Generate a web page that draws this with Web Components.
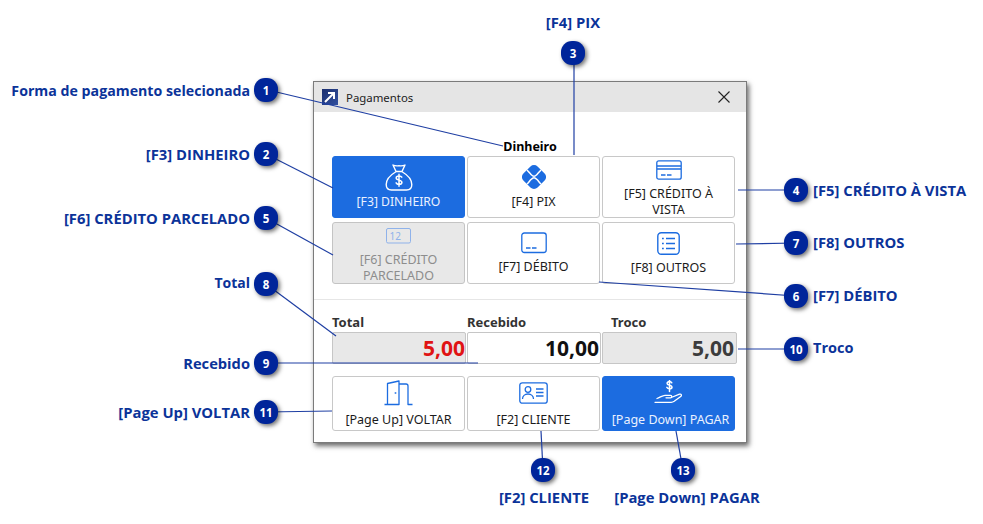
<!DOCTYPE html>
<html lang="pt"><head><meta charset="utf-8"><title>Pagamentos</title>
<style>html,body{margin:0;padding:0;background:#fff}</style></head>
<body>
<annotated-diagram>
  <pay-window>
    <span slot="title">Pagamentos</span>
    <span slot="selected">Dinheiro</span>
    <pay-button slot="methods" variant="primary" icon="bag">[F3] DINHEIRO</pay-button>
    <pay-button slot="methods" icon="pix">[F4] PIX</pay-button>
    <pay-button slot="methods" icon="card">[F5] CRÉDITO À VISTA</pay-button>
    <pay-button slot="methods" variant="disabled" icon="parc">[F6] CRÉDITO PARCELADO</pay-button>
    <pay-button slot="methods" icon="debit">[F7] DÉBITO</pay-button>
    <pay-button slot="methods" icon="list">[F8] OUTROS</pay-button>
    <amount-field slot="amounts" label="Total" value="5,00" kind="total"></amount-field>
    <amount-field slot="amounts" label="Recebido" value="10,00" kind="input"></amount-field>
    <amount-field slot="amounts" label="Troco" value="5,00" kind="change"></amount-field>
    <pay-button slot="actions" icon="door">[Page Up] VOLTAR</pay-button>
    <pay-button slot="actions" icon="client">[F2] CLIENTE</pay-button>
    <pay-button slot="actions" variant="primary" icon="hand">[Page Down] PAGAR</pay-button>
  </pay-window>
</annotated-diagram>
<script>
const ICONS={
bag:`<svg width="28" height="27" viewBox="0 0 28 27" fill="none" stroke="currentColor" stroke-width="1.400" stroke-linejoin="round" stroke-linecap="round"><path d="M8 1c2.500 1.300 4 .8 6 .8s3.500.5 6-.8l-3 6.500h-6z"/><path d="M10.500 8C5.500 11 1.200 16 1.200 20.500c0 3.500 2 5.500 5.300 5.500h15c3.300 0 5.300-2 5.300-5.500C26.800 16 22.500 11 17.500 8"/><path d="M16.800 13.200c-.5-.9-1.500-1.300-2.800-1.300-1.600 0-2.800.9-2.800 2.100 0 2.800 5.700 1.400 5.700 4.300 0 1.200-1.200 2.100-2.900 2.100-1.300 0-2.400-.6-2.900-1.500M14 10.200v12" stroke-width="1.500"/></svg>`,
pix:`<svg width="26" height="26" viewBox="0 0 26 26"><rect x="3" y="3" width="20" height="20" rx="5" fill="currentColor" transform="rotate(45 13 13)"/><path d="M6 6c2 2 2.500 3 4 4.500 1.500 1.500 2 1.800 3 1.800s1.500-.3 3-1.800C17.500 9 18 8 20 6M6 20c2-2 2.500-3 4-4.500 1.500-1.500 2-1.800 3-1.800s1.500.3 3 1.800c1.500 1.500 2 2.500 4 4.500" fill="none" stroke="#fff" stroke-width="1.500"/></svg>`,
card:`<svg width="26" height="20" viewBox="0 0 26 20" fill="none" stroke="currentColor" stroke-width="1.300"><rect x=".8" y=".8" width="24.400" height="18.400" rx="2"/><path d="M1 6h24M1 9h24M5 15h4.500M11 15h4.500"/></svg>`,
parc:`<svg width="26" height="16" viewBox="0 0 26 16" fill="none" stroke="currentColor" stroke-width="1"><rect x=".5" y=".5" width="24" height="14.500" rx="1.500"/><text x="3.500" y="11.500" font-family="'Noto Sans',sans-serif" font-size="10" fill="currentColor" stroke="none">12</text></svg>`,
debit:`<svg width="26" height="22" viewBox="0 0 26 22" fill="none" stroke="currentColor" stroke-width="1.300"><rect x=".8" y="1" width="24.400" height="19.500" rx="2.500"/><path d="M5 16h4.500M11 16h4.500"/></svg>`,
list:`<svg width="23" height="23" viewBox="0 0 23 23" fill="none" stroke="currentColor" stroke-width="1.400"><rect x=".8" y=".8" width="21.400" height="21.400" rx="3.500"/><path d="M9 6.500h9M9 11.500h9M9 16.500h9M5 6.500h1.800M5 11.500h1.800M5 16.500h1.800"/></svg>`,
door:`<svg width="29" height="26" viewBox="0 0 29 26" fill="none" stroke="currentColor" stroke-width="1.300" stroke-linejoin="round"><path d="M.5 24.500H3.500V3.500L15 1v23.500H3.500"/><path d="M15 4h7c1.200 0 2 .8 2 2v18.500h4.500"/><path d="M11.500 12.200v1.600" stroke-width="1.600"/></svg>`,
client:`<svg width="29" height="22" viewBox="0 0 29 22" fill="none" stroke="currentColor" stroke-width="1.300"><rect x=".8" y=".8" width="27.400" height="20.400" rx="2.500"/><circle cx="9" cy="7.500" r="2.800"/><path d="M3.500 17c0-3 2.300-5 5.500-5s5.500 2 5.500 5"/><path d="M17 7h7.500M17 10.500h7.500M17 14h7.500" stroke-width="1.500"/></svg>`,
hand:`<svg width="30" height="25" viewBox="0 0 30 25" fill="none" stroke="currentColor" stroke-width="1.300" stroke-linecap="round" stroke-linejoin="round"><path d="M17.800 2.800c-.5-.9-1.300-1.200-2.300-1.200-1.400 0-2.400.8-2.400 1.800 0 2.300 4.900 1.200 4.900 3.500 0 1.100-1.100 1.900-2.500 1.900-1.100 0-2.100-.5-2.600-1.400M15.500 0v11.500" stroke-width="1.500"/><path d="M3 18.500c3-1 5.500-3.200 8-3.200h5.500c1.700 0 1.700 2.500 0 2.500H12M18.500 17l7-2.800c1.800-.6 2.700 1.300 1.200 2.300l-6.500 4.800c-1 .7-2 1-3 1H1"/></svg>`};
/* margin above / below each icon, so the icon+label block sits as in the dialog */
const GAPS={bag:[0,3],pix:[0,4],card:[4,6],parc:[6,8],debit:[1,5],list:[1,5],door:[0,6],client:[2,8],hand:[1,7]};

class AnnotatedDiagram extends HTMLElement{
  constructor(){super();
    const r=this.attachShadow({mode:'open'});
    const pins=[[1,266,90],[2,266,154],[3,573,53],[4,796,190],[5,266,218],[6,796,296],[7,796,243],[8,266,284],[9,266,363],[10,796,349],[11,266,412],[12,543,470],[13,683,470]];
    const labels=[
     ['Forma de pagamento selecionada','r',250,91,14.200],['[F3] DINHEIRO','r',250,154,14.800],['[F6] CRÉDITO PARCELADO','r',250,218,14.800],
     ['Total','r',250,283,14],['Recebido','r',250,363,14.700],['[Page Up] VOLTAR','r',250,412,14.800],
     ['[F5] CRÉDITO À VISTA','l',813,190,14.800],['[F8] OUTROS','l',813,242,14.800],['[F7] DÉBITO','l',813,295,14.800],['Troco','l',813,348,14.500],
     ['[F4] PIX','c',573,22,14.800],['[F2] CLIENTE','c',544,497,14.800],['[Page Down] PAGAR','c',687,497,14.800]];
    const lines=[[268,90,503,146],[266,154,333,188],[574,53,574,155],[796,190,738,190],[266,218,333,255],[796,296,599,282],[796,243,736,244],[266,284,336,336],[266,363,478,363],[796,349,738,349],[266,412,332,411],[543,470,541,431],[683,470,676,431]];
    r.innerHTML=`<style>
      :host{display:block;position:relative;width:983px;height:524px;overflow:hidden;background:#fff}
      .lines{position:absolute;inset:0;pointer-events:none}
      .lines line{stroke:#1f3fa3;stroke-width:1.200}
    </style><slot></slot>
    <svg class="lines" width="983" height="524">${lines.map(l=>`<line x1="${l[0]}" y1="${l[1]}" x2="${l[2]}" y2="${l[3]}"/>`).join('')}</svg>
    ${labels.map(l=>`<callout-label side="${l[1]}" x="${l[2]}" y="${l[3]}" size="${l[4]}">${l[0]}</callout-label>`).join('')}
    ${pins.map(p=>`<callout-pin x="${p[1]}" y="${p[2]}">${p[0]}</callout-pin>`).join('')}`;
  }
}
class CalloutPin extends HTMLElement{
  connectedCallback(){
    if(this.shadowRoot)return;
    const r=this.attachShadow({mode:'open'});
    r.innerHTML=`<style>:host{position:absolute;left:${this.getAttribute('x')-12}px;top:${this.getAttribute('y')-12}px;width:24px;height:24px;border-radius:11px;background:#00259a;color:#fff;display:flex;align-items:center;justify-content:center;font:700 11.500px "Open Sans",sans-serif;box-shadow:2px 2px 4px rgba(0,0,0,.55)}</style><slot></slot>`;
  }
}
class CalloutLabel extends HTMLElement{
  connectedCallback(){
    if(this.shadowRoot)return;
    const r=this.attachShadow({mode:'open'});
    const s=this.getAttribute('side'),x=+this.getAttribute('x'),y=+this.getAttribute('y');
    const pos=s==='r'?`right:${983-x}px;`:s==='l'?`left:${x}px;`:`left:${x}px;transform:translateX(-50%);`;
    r.innerHTML=`<style>:host{position:absolute;${pos}top:${y-11}px;height:22px;white-space:nowrap;color:#0b3399;font:700 ${this.getAttribute('size')}px/22px "Open Sans",sans-serif}</style><slot></slot>`;
  }
}
class PayWindow extends HTMLElement{
  constructor(){super();
    this.attachShadow({mode:'open'}).innerHTML=`<style>
      :host{position:absolute;left:313px;top:81px;width:434px;height:362px;box-sizing:border-box;border:1px solid #7b7b7b;background:#fff;box-shadow:2px 3px 5px rgba(0,0,0,.6);display:flex;flex-direction:column;font:12px "Noto Sans",sans-serif;color:#111}
      .bar{height:30px;background:#e5e5e5;display:flex;align-items:center;padding:0 16px 0 8px;gap:8px;flex:none}
      .logo{width:16px;height:16px;background:linear-gradient(135deg,#1b2f6e,#32509f);display:block;flex:none}
      .title{flex:1;font-size:11.400px;color:#222}
      .close{display:block;flex:none}
      .body{flex:1;display:flex;flex-direction:column;padding:0 11px 0 18px}
      .sel{height:44px;box-sizing:border-box;padding-top:26px;text-align:center;font:700 12.500px/18px "Noto Sans",sans-serif;color:#000;margin-left:-7px}
      .grid{display:grid;grid-template-columns:133px 133px 133px;column-gap:2px}
      .methods{grid-auto-rows:62px;row-gap:4px}
      .actions{grid-auto-rows:55px;margin-top:12px}
      .amounts{grid-template-columns:134px 134px 135px;column-gap:1px;margin-top:11px}
      hr{border:0;border-top:1px solid #e6e6e6;margin:15px -11px 0 -18px}
    </style>
    <div class="bar"><svg class="logo" viewBox="0 0 16 16"><path d="M3 13L11 5M6 4h6v6" fill="none" stroke="#fff" stroke-width="2"/></svg><span class="title"><slot name="title"></slot></span>
    <svg class="close" width="12" height="12" viewBox="0 0 12 12"><path d="M.5 .5l11 11M11.500 .5l-11 11" stroke="#222" stroke-width="1.100"/></svg></div>
    <div class="body"><div class="sel"><slot name="selected"></slot></div>
    <div class="grid methods"><slot name="methods"></slot></div><hr>
    <div class="grid amounts"><slot name="amounts"></slot></div>
    <div class="grid actions"><slot name="actions"></slot></div></div>`;
  }
}
class PayButton extends HTMLElement{
  connectedCallback(){
    if(this.shadowRoot)return;
    const v=this.getAttribute('variant')||'';
    const pal=v==='primary'?'background:#1c6ce0;border-color:#1c6ce0;color:#eaf1ff;--ic:#fff':
      v==='disabled'?'background:#e8e8e8;border-color:#c4c4c4;color:#8d8d8d;--ic:#8fb2ea':'background:#fff;border-color:#c8c8c8;color:#1b1b1b;--ic:#1c6ce0';
    const ic=this.getAttribute('icon');
    const g=GAPS[ic];
    this.attachShadow({mode:'open'}).innerHTML=`<style>
      :host{display:flex;flex-direction:column;align-items:center;justify-content:center;box-sizing:border-box;border:1px solid;border-radius:3px;${pal};text-align:center;font:${ic==='bag'?12.200:12.500}px/16px "Noto Sans",sans-serif;overflow:hidden}
      .i{color:var(--ic);line-height:0;flex:none;margin:${g[0]}px 0 ${g[1]}px}
      svg{display:block}
      .t{padding:${ic==='hand'?'0 1px 0 5px':'0 5px'}}
    </style><div class="i">${ICONS[ic]}</div><div class="t"><slot></slot></div>`;
  }
}
class AmountField extends HTMLElement{
  connectedCallback(){
    if(this.shadowRoot)return;
    const k=this.getAttribute('kind');
    const st=k==='total'?'background:#e8e8e8;color:#e01414':k==='change'?'background:#e8e8e8;color:#3c3c3c':'background:#fff;color:#111';
    this.attachShadow({mode:'open'}).innerHTML=`<style>
      :host{display:block}
      .l{font:700 13px/23px "Noto Sans",sans-serif;color:#333;height:21px;padding-left:${k==='change'?9:0}px}
      .v{height:32px;box-sizing:border-box;border:1px solid #c6c6c6;border-radius:2px;${st};display:flex;align-items:center;justify-content:flex-end;padding-right:${k==='total'?0:k==='change'?2:1}px;font:700 21px/30px "Noto Sans",sans-serif}
    </style><div class="l">${this.getAttribute('label')}</div><div class="v">${this.getAttribute('value')}</div>`;
  }
}
customElements.define('annotated-diagram',AnnotatedDiagram);
customElements.define('callout-pin',CalloutPin);
customElements.define('callout-label',CalloutLabel);
customElements.define('pay-window',PayWindow);
customElements.define('pay-button',PayButton);
customElements.define('amount-field',AmountField);
</script>
</body></html>
